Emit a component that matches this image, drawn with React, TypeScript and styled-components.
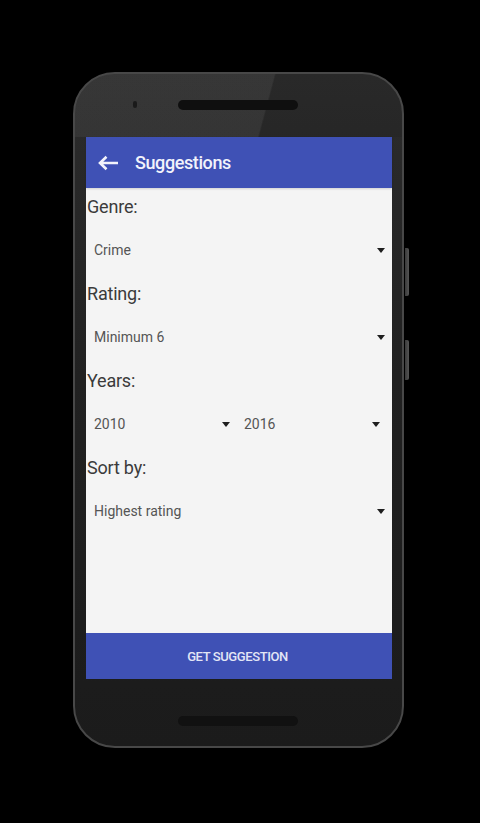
import { createGlobalStyle, styled } from 'styled-components';

const GlobalStyle = createGlobalStyle`
  html, body {
    margin: 0;
    padding: 0;
    background: #000;
  }
  body {
    font-family: Roboto, 'Noto Sans', Arial, sans-serif;
  }
  * {
    box-sizing: border-box;
  }
`;

const Page = styled.div`
  width: 480px;
  height: 823px;
  background: #000;
  padding: 72px 0 0 73px;
`;

const PhoneWrap = styled.div`
  position: relative;
  width: 332px;
`;

const Phone = styled.div`
  width: 331px;
  height: 676px;
  border-radius: 42px;
  border: 2px solid #484848;
  background: linear-gradient(to bottom, #2c2c2c 0%, #212121 45%, #1b1b1b 100%);
  overflow: hidden;
  display: flex;
  flex-direction: column;
`;

const TopBezel = styled.div`
  height: 63px;
  display: flex;
  align-items: center;
  padding-left: 58px;
  background: linear-gradient(105deg, rgba(255, 255, 255, 0.05) 0%, rgba(255, 255, 255, 0.05) 58%, rgba(0, 0, 0, 0.08) 58.5%);
`;

const Camera = styled.div`
  width: 4px;
  height: 7px;
  border-radius: 2px;
  background: #1a1a1a;
  margin-top: -2px;
`;

const Speaker = styled.div<{ $bottom?: boolean }>`
  width: 120px;
  height: 10px;
  border-radius: 5px;
  background: ${(p) => (p.$bottom ? '#111' : '#0f0f0f')};
  margin-left: ${(p) => (p.$bottom ? '103px' : '41px')};
  margin-top: -2px;
`;

const Screen = styled.div`
  margin-left: 11px;
  width: 306px;
  height: 542px;
  display: flex;
  flex-direction: column;
  background: #f4f4f4;
`;

const AppBar = styled.div`
  height: 51px;
  background: #3f51b5;
  display: flex;
  align-items: center;
  padding-left: 11px;
  gap: 16px;
  box-shadow: 0 1px 2px rgba(0, 0, 0, 0.15);
`;

const Title = styled.div`
  color: #f2f3fb;
  font-size: 18px;
  font-weight: 500;
  letter-spacing: -0.4px;
`;

const Content = styled.div`
  flex: 1;
  padding: 7px 0 0 1px;
`;

const Label = styled.div`
  font-size: 18px;
  line-height: 24px;
  color: #3b3b3b;
  letter-spacing: -0.2px;
`;

const Row = styled.div`
  display: grid;
  grid-template-columns: 1fr 1fr;
  padding-right: 5px;
`;

const Spinner = styled.div`
  height: 48px;
  margin: 7px 0 8px;
  display: flex;
  align-items: center;
  justify-content: space-between;
  padding: 0 7px 0 7px;
  font-size: 14px;
  color: #555;
`;

const ActionBar = styled.div`
  height: 46px;
  background: #3f51b5;
  display: flex;
  align-items: center;
  justify-content: center;
  color: #e3e6f6;
  font-size: 13px;
  font-weight: 500;
  letter-spacing: -0.4px;
  padding-right: 3px;
`;

const BottomBezel = styled.div`
  flex: 1;
  display: flex;
  align-items: flex-start;
  padding-top: 39px;
`;

const SideButton = styled.div<{ $top: number; $height: number }>`
  position: absolute;
  right: -4px;
  top: ${(p) => p.$top}px;
  width: 4px;
  height: ${(p) => p.$height}px;
  border-radius: 0 2px 2px 0;
  background: linear-gradient(to right, #3a3a3a, #555);
`;

function Caret() {
  return (
    <svg width="8" height="5" viewBox="0 0 8 5">
      <polygon points="0,0 8,0 4,5" fill="#1e1e1e" />
    </svg>
  );
}

function Select({ value }: { value: string }) {
  return (
    <Spinner>
      <span>{value}</span>
      <Caret />
    </Spinner>
  );
}

function BackArrow() {
  return (
    <svg width="22" height="16" viewBox="0 0 22 16">
      <path
        d="M21 8H3M9.5 1.8L3 8l6.5 6.2"
        fill="none"
        stroke="#f2f3fb"
        strokeWidth="2.6"
      />
    </svg>
  );
}

export default function App() {
  return (
    <Page>
      <GlobalStyle />
      <PhoneWrap>
        <Phone>
          <TopBezel>
            <Camera />
            <Speaker />
          </TopBezel>
          <Screen>
            <AppBar>
              <BackArrow />
              <Title>Suggestions</Title>
            </AppBar>
            <Content>
              <Label>Genre:</Label>
              <Select value="Crime" />
              <Label>Rating:</Label>
              <Select value="Minimum 6" />
              <Label>Years:</Label>
              <Row>
                <Select value="2010" />
                <Select value="2016" />
              </Row>
              <Label>Sort by:</Label>
              <Select value="Highest rating" />
            </Content>
            <ActionBar>GET SUGGESTION</ActionBar>
          </Screen>
          <BottomBezel>
            <Speaker $bottom />
          </BottomBezel>
        </Phone>
        <SideButton $top={176} $height={48} />
        <SideButton $top={268} $height={40} />
      </PhoneWrap>
    </Page>
  );
}
